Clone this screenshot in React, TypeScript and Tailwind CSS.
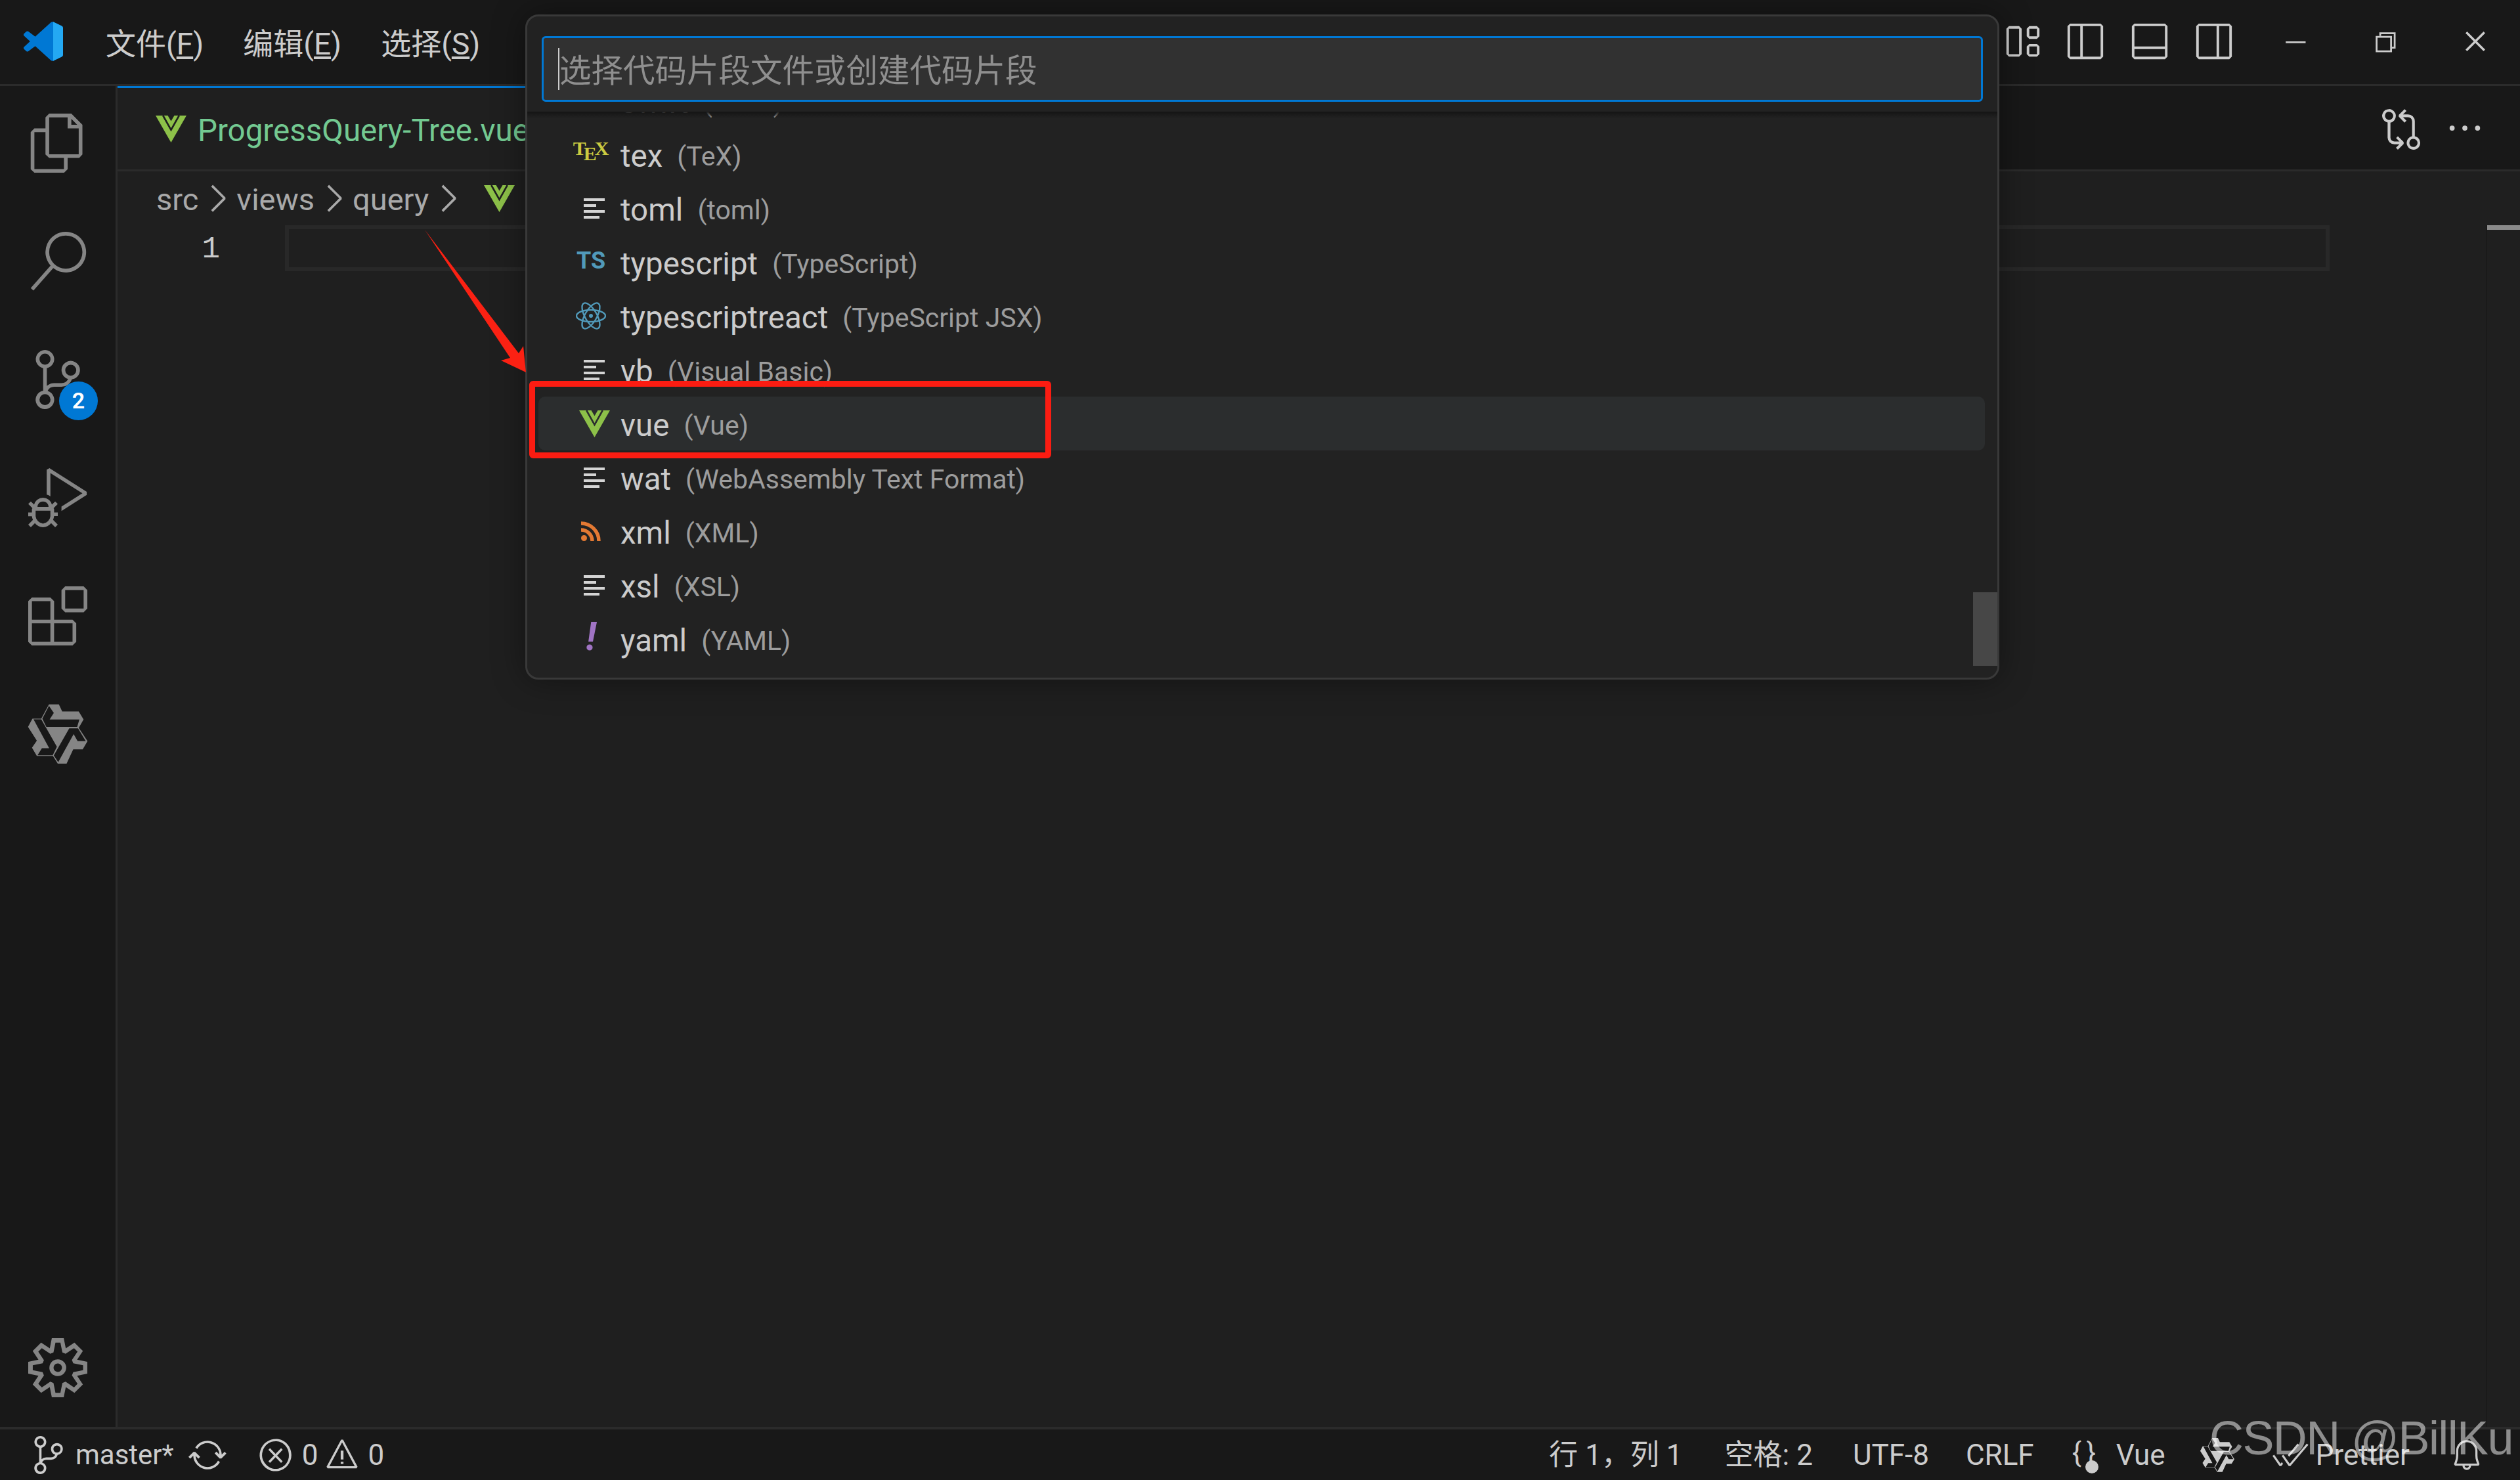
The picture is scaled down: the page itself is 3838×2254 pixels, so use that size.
import React from "react";
import {
  VscFiles,
  VscSearch,
  VscSourceControl,
  VscDebugAlt,
  VscExtensions,
  VscSettingsGear,
  VscGitCompare,
  VscEllipsis,
  VscChevronRight,
  VscSync,
  VscError,
  VscWarning,
  VscBell,
  VscCheckAll,
  VscLayout,
  VscLayoutSidebarLeftOff,
  VscLayoutPanelOff,
  VscLayoutSidebarRightOff,
  VscChromeMinimize,
  VscChromeRestore,
  VscChromeClose,
} from "react-icons/vsc";

const VueIcon = ({ dark = "#222222" }: { dark?: string }) => (
  <svg viewBox="0 0 142 124" className="w-[47px] h-[41px]">
    <polygon points="0,0 142,0 71,124" fill="#8dc149" />
    <polyline points="34,0 71,66 108,0" fill="none" stroke={dark} strokeWidth="8" />
    <polygon points="56,0 86,0 71,26" fill={dark} />
  </svg>
);

const Spark = ({ fill, bg, className }: { fill: string; bg: string; className: string }) => (
  <svg viewBox="40 58 280 280" className={className}>
    <polygon
      points="140,63 185,63 200,95 275,95 297,132 275,170 315,230 293,267 250,267 220,332 180,332 158,297 85,297 63,260 85,228 45,165 65,128 105,128"
      fill={fill}
    />
    <polygon points="140,70 162,102 143,132 278,132 268,165 128,165 110,128" fill={bg} />
    <polygon points="70,131 105,131 176,255 157,294 88,294 108,262 141,262" fill={bg} />
    <polygon points="232,172 272,172 307,230 270,230 252,198 182,325 162,295" fill={bg} />
  </svg>
);

const LinesIcon = () => (
  <div className="flex flex-col gap-[5px] w-[32px]">
    <div className="h-[4px] w-full bg-[#d4d4d4]" />
    <div className="h-[4px] w-[60%] bg-[#d4d4d4]" />
    <div className="h-[4px] w-full bg-[#d4d4d4]" />
    <div className="h-[4px] w-[75%] bg-[#d4d4d4]" />
  </div>
);

const TexIcon = () => (
  <div className="flex font-['Liberation_Serif',serif] font-bold text-[#cbcb41] leading-none text-[30px] -mt-[10px] -ml-[10px]">
    <span>T</span>
    <span className="mt-[8px] -ml-[4px]">E</span>
    <span className="-ml-[3px]">X</span>
  </div>
);

const ReactIcon = () => (
  <svg viewBox="0 0 46 56" className="w-[46px] h-[56px] -ml-[10px]" fill="none" stroke="#519aba" strokeWidth="2.4">
    <ellipse cx="23" cy="28" rx="22" ry="9" />
    <ellipse cx="23" cy="28" rx="22" ry="9" transform="rotate(60 23 28)" />
    <ellipse cx="23" cy="28" rx="22" ry="9" transform="rotate(120 23 28)" />
    <circle cx="23" cy="28" r="3" fill="#519aba" stroke="none" />
  </svg>
);

const RssIcon = () => (
  <svg viewBox="0 0 30 30" className="w-[30px] h-[30px] -ml-[10px]" fill="none" stroke="#e37933" strokeWidth="5.5">
    <circle cx="4.5" cy="25.5" r="4.5" fill="#e37933" stroke="none" />
    <path d="M0 13a17 17 0 0 1 17 17" />
    <path d="M0 3a27 27 0 0 1 27 27" />
  </svg>
);

const rows: { name: string; desc: string; icon: React.ReactNode }[] = [
  { name: "swift", desc: "(Swift)", icon: <LinesIcon /> },
  { name: "tex", desc: "(TeX)", icon: <TexIcon /> },
  { name: "toml", desc: "(toml)", icon: <LinesIcon /> },
  {
    name: "typescript",
    desc: "(TypeScript)",
    icon: <span className="font-bold text-[36px] leading-none text-[#519aba] -mt-[5px] -ml-[10px]">TS</span>,
  },
  { name: "typescriptreact", desc: "(TypeScript JSX)", icon: <ReactIcon /> },
  { name: "vb", desc: "(Visual Basic)", icon: <LinesIcon /> },
  { name: "vue", desc: "(Vue)", icon: <VueIcon dark="#2b2d2e" /> },
  { name: "wat", desc: "(WebAssembly Text Format)", icon: <LinesIcon /> },
  { name: "xml", desc: "(XML)", icon: <RssIcon /> },
  { name: "xsl", desc: "(XSL)", icon: <LinesIcon /> },
  {
    name: "yaml",
    desc: "(YAML)",
    icon: <span className="font-bold italic text-[60px] leading-none text-[#a074c4] -mt-[7px] -ml-[10px]">!</span>,
  },
];

const Palette = () => (
  <div className="absolute left-[800px] top-[22px] w-[2245px] h-[1013px] rounded-[20px] border-[3px] border-[#393939] bg-[#222222] shadow-[0_0_50px_rgba(0,0,0,0.4)] overflow-hidden flex flex-col">
    <div className="h-[145px] shrink-0 pl-[22px] pt-[30px]">
      <div className="w-[2195px] h-[100px] rounded-[6px] border-[3px] border-[#0078d4] bg-[#313131] flex items-center pl-[22px] text-[48.5px] text-[#8f8f8f]">
        <div className="w-[2px] h-[64px] bg-[#cccccc]" />
        <span className="mt-[8px]">选择代码片段文件或创建代码片段</span>
      </div>
    </div>
    <div className="relative flex-1 overflow-hidden">
      <div className="absolute inset-x-0 top-0 h-[10px] bg-gradient-to-b from-[#141414] to-transparent" />
      <div className="-mt-[58px] ml-[17px] mr-[19px]">
        {rows.map((r) => (
          <div
            key={r.name}
            className={`flex items-center h-[82px] rounded-[10px] ${r.name === "vue" ? "bg-[#2b2d2e]" : ""}`}
          >
            <div className="w-[125px] pl-[60px] shrink-0">
              <div className="w-[50px] flex justify-center">{r.icon}</div>
            </div>
            <span className="mt-[8px] text-[47.5px] text-[#cccccc]">{r.name}</span>
            <span className="mt-[8px] ml-[22px] text-[41px] text-[#9d9d9d]">{r.desc}</span>
          </div>
        ))}
      </div>
    </div>
    <div className="absolute right-0 top-[877px] w-[37px] h-[112px] bg-[#474747]" />
  </div>
);

const Crumb = ({ children }: { children: React.ReactNode }) => (
  <>
    <span className="mt-[4px]">{children}</span>
    <VscChevronRight size={66} className="mx-[-4px] text-[#a9a9a9]" />
  </>
);

export default function App() {
  return (
    <div className="relative w-[3838px] h-[2254px] overflow-hidden flex flex-col bg-[#1f1f1f] text-[#cccccc] font-['Roboto','Noto_Sans_CJK_SC',sans-serif]">
      {/* title bar */}
      <div className="h-[131px] shrink-0 flex items-center bg-[#181818] border-b-[3px] border-[#2b2b2b] pl-[36px] pr-[46px] pb-[3px]">
        <svg viewBox="0 0 100 100" className="w-[60px] h-[62px] shrink-0">
          <path
            d="M70.9 99.3c1.6.6 3.4.6 5-.2l20.6-9.9A6.2 6.2 0 0 0 100 83.6V16.4a6.2 6.2 0 0 0-3.5-5.6L75.9.9c-2.1-1-4.5-.8-6.3.5a6 6 0 0 0-.7.6L29.4 38 12.2 25a4.2 4.2 0 0 0-5.3.2l-5.5 5a4.2 4.2 0 0 0 0 6.2L16.3 50 1.4 63.6a4.2 4.2 0 0 0 0 6.2l5.5 5a4.2 4.2 0 0 0 5.3.2l17.2-13 39.5 36a6.2 6.2 0 0 0 2 1.3zM75 27.3 45 50l30 22.7V27.3z"
            fill="#0078d4"
          />
          <path d="M75 0.5 96.5 10.8A6.2 6.2 0 0 1 100 16.4V83.6a6.2 6.2 0 0 1-3.5 5.6L75 99.6z" fill="#24a9f3" />
        </svg>
        <div className="flex text-[46px] ml-[65px] gap-[60px] mt-[10px]">
          <span>文件(<u>F</u>)</span>
          <span>编辑(<u>E</u>)</span>
          <span>选择(<u>S</u>)</span>
        </div>
        <div className="ml-auto flex items-center">
          <VscLayout size={62} />
          <VscLayoutSidebarLeftOff size={62} className="ml-[35px]" />
          <VscLayoutPanelOff size={62} className="ml-[36px]" />
          <VscLayoutSidebarRightOff size={62} className="ml-[36px]" />
          <VscChromeMinimize size={44} className="ml-[70px]" />
          <VscChromeRestore size={44} className="ml-[93px]" />
          <VscChromeClose size={44} className="ml-[94px]" />
        </div>
      </div>

      <div className="flex-1 flex min-h-0">
        {/* activity bar */}
        <div className="w-[179px] shrink-0 flex flex-col justify-between bg-[#181818] border-r-[3px] border-[#2b2b2b] text-[#858585]">
          <div className="-mt-[3px]">
            <div className="h-[180px] flex items-center justify-center"><VscFiles size={90} /></div>
            <div className="h-[180px] flex items-center justify-center"><VscSearch size={90} /></div>
            <div className="relative h-[180px] flex items-center justify-center">
              <VscSourceControl size={90} />
              <div className="absolute left-[90px] top-[93px] w-[59px] h-[59px] rounded-full bg-[#0078d4] text-white text-[34px] font-semibold flex items-center justify-center">
                2
              </div>
            </div>
            <div className="h-[180px] flex items-center justify-center"><VscDebugAlt size={90} /></div>
            <div className="h-[180px] flex items-center justify-center"><VscExtensions size={90} /></div>
            <div className="h-[180px] flex items-center justify-center">
              <Spark fill="#858585" bg="#181818" className="w-[94px] h-[94px]" />
            </div>
          </div>
          <div className="h-[180px] flex items-center justify-center"><VscSettingsGear size={90} /></div>
        </div>

        {/* editor */}
        <div className="flex-1 min-w-0 flex flex-col">
          <div className="h-[130px] shrink-0 flex bg-[#181818] border-b-[3px] border-[#2b2b2b]">
            <div className="w-[1000px] h-[127px] bg-[#1f1f1f] border-t-[3px] border-[#0078d4] flex items-center pl-[58px] gap-[17px] text-[47.5px] text-[#73c991]">
              <VueIcon dark="#1f1f1f" />
              <span className="mt-[8px]">ProgressQuery-Tree.vue</span>
            </div>
            <div className="ml-auto flex items-center pr-[53px] text-[#cccccc]">
              <VscGitCompare size={66} />
              <VscEllipsis size={62} className="ml-[33px]" />
            </div>
          </div>
          <div className="h-[82px] shrink-0 flex items-center pl-[59px] text-[47px] text-[#a9a9a9]">
            <Crumb>src</Crumb>
            <Crumb>views</Crumb>
            <Crumb>query</Crumb>
            <div className="ml-[26px]"><VueIcon dark="#1f1f1f" /></div>
          </div>
          <div className="flex-1 flex min-h-0">
            <div className="w-[255px] shrink-0 h-[70px] flex items-center justify-end pr-[99px] pt-[4px] text-[46px] text-[#cccccc] font-['Liberation_Mono',monospace]">
              1
            </div>
            <div className="w-[3114px] h-[70px] shrink-0 border-[6px] border-[#282828]" />
            <div className="w-[239px] shrink-0" />
            <div className="flex-1 border-l border-[#151515]">
              <div className="h-[7px] bg-[#8a8a8a]" />
            </div>
          </div>
        </div>
      </div>

      {/* status bar */}
      <div className="h-[81px] shrink-0 flex items-center bg-[#181818] border-t-[4px] border-[#2b2b2b] text-[44px] pl-[45px] pr-[55px]">
        <VscSourceControl size={58} />
        <span className="ml-[12px] text-[42px]">master*</span>
        <VscSync size={58} className="ml-[22px]" />
        <VscError size={56} className="ml-[47px]" />
        <span className="ml-[12px]">0</span>
        <VscWarning size={54} className="ml-[10px]" />
        <span className="ml-[12px]">0</span>
        <span className="ml-auto">行 1，列 1</span>
        <span className="ml-[64px]">空格: 2</span>
        <span className="ml-[61px]">UTF-8</span>
        <span className="ml-[56px]">CRLF</span>
        <span className="ml-[58px] relative w-[42px] h-[56px] text-[42px] leading-[50px]">
          {"{"}
          <span className="absolute left-[22px] top-0">{"}"}</span>
          <span className="absolute left-[20px] bottom-0 w-[20px] h-[20px] rounded-full bg-[#cccccc]" />
        </span>
        <span className="ml-[25px]">Vue</span>
        <Spark fill="#cccccc" bg="#181818" className="ml-[52px] w-[54px] h-[54px]" />
        <VscCheckAll size={56} className="ml-[57px]" />
        <span className="ml-[10px]">Prettier</span>
        <VscBell size={52} className="ml-[61px]" />
      </div>

      <Palette />

      {/* red annotation */}
      <svg viewBox="0 0 3838 2254" className="absolute inset-0 w-[3838px] h-[2254px] pointer-events-none">
        <polygon points="647,350 790,538 797,527 801,567 763,549 777,545" fill="#fb2113" />
      </svg>
      <div className="absolute left-[806px] top-[580px] w-[795px] h-[118px] border-[9px] border-[#fb1c12] rounded-[6px]" />

      {/* watermark */}
      <div className="absolute left-[3365px] top-[2146px] font-['Liberation_Sans',sans-serif] text-[72px] tracking-[-1.6px] leading-[88px] whitespace-nowrap text-white/50">
        CSDN @BillKu
      </div>
    </div>
  );
}
